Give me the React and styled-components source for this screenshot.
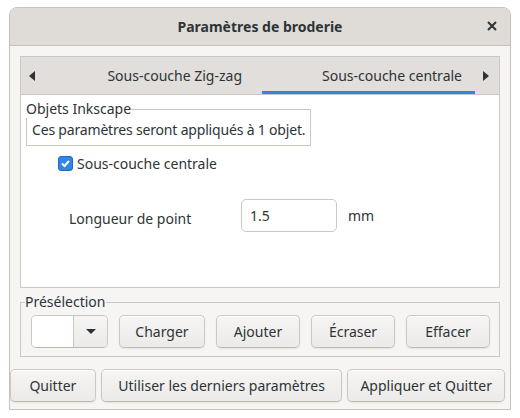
import React from 'react'
import styled, { createGlobalStyle } from 'styled-components'

const GlobalStyle = createGlobalStyle`
  html, body {
    margin: 0;
    padding: 0;
    background: #ffffff;
  }
  body {
    font-family: "Noto Sans", "DejaVu Sans", sans-serif;
    font-size: 14px;
    color: #2e3436;
  }
`

const Page = styled.div`
  width: 520px;
  height: 418px;
  padding: 7px 9px 8px 9px;
  box-sizing: border-box;
`

const Window = styled.div`
  height: 403px;
  border: 1px solid #c6c1bc;
  border-radius: 8px 8px 0 0;
  background: #f6f5f4;
  display: flex;
  flex-direction: column;
  overflow: hidden;
  box-sizing: border-box;
`

const TitleBar = styled.div`
  height: 37px;
  flex: none;
  background: #dfdcd8;
  border-bottom: 1px solid #c6c1bc;
  display: flex;
  align-items: center;
  justify-content: center;
  position: relative;
  font-weight: bold;
  font-size: 14px;
  color: #2e3436;
`

const CloseButton = styled.div`
  position: absolute;
  right: 12px;
  top: 12px;
  width: 12px;
  height: 12px;
  display: flex;
  align-items: center;
  justify-content: center;
`

const Body = styled.div`
  flex: 1;
  display: flex;
  flex-direction: column;
  padding: 10px 10px 0 10px;
`

const Notebook = styled.div`
  height: 232px;
  border: 1px solid #cdc7c2;
  display: flex;
  flex-direction: column;
  box-sizing: border-box;
`

const TabBar = styled.div`
  height: 37px;
  flex: none;
  background: #e1dedb;
  border-bottom: 1px solid #cdc7c2;
  display: flex;
  align-items: stretch;
`

const Arrow = styled.div`
  width: 22px;
  flex: none;
  display: flex;
  align-items: center;
  justify-content: center;
`

const Tab = styled.div`
  width: ${p => p.$w}px;
  display: flex;
  align-items: center;
  justify-content: flex-end;
  padding-right: ${p => p.$pr}px;
  box-sizing: border-box;
  color: #2e3436;
  border-bottom: 3px solid ${p => (p.$active ? '#3584e4' : 'transparent')};
  padding-top: 3px;
  white-space: nowrap;
`

const Page1 = styled.div`
  flex: 1;
  background: #ffffff;
  padding: 5px 5px 0 5px;
  display: flex;
  flex-direction: column;
  align-items: flex-start;
`

const Frame = styled.fieldset`
  margin: 0;
  padding: 0 5px 5px 5px;
  border: 1px solid #cdc7c2;
  box-sizing: border-box;
  min-width: 0;
`

const Legend = styled.legend`
  padding: 0;
  margin-left: -6px;
  font-size: 14px;
  line-height: 18px;
  color: #2e3436;
`

const InfoText = styled.div`
  line-height: 20px;
  padding-top: 2px;
  white-space: nowrap;
  letter-spacing: -0.18px;
`

const CheckRow = styled.label`
  display: flex;
  align-items: center;
  gap: 4px;
  margin: 8px 0 0 32px;
`

const CheckBox = styled.span`
  width: 15px;
  height: 15px;
  border-radius: 3px;
  background: #3584e4;
  border: 1px solid #1b6acb;
  box-sizing: border-box;
  display: flex;
  align-items: center;
  justify-content: center;
`

const FieldRow = styled.div`
  display: flex;
  align-items: center;
  margin: 27px 0 0 43px;
`

const FieldLabel = styled.div`
  width: 172px;
  padding-top: 4px;
`

const Entry = styled.div`
  width: 96px;
  height: 33px;
  box-sizing: border-box;
  border: 1px solid #cdc7c2;
  border-radius: 5px;
  background: #ffffff;
  padding: 0 8px;
  display: flex;
  align-items: center;
  margin-top: -1px;
  margin-right: 11px;
  color: #2e3436;
`

const Unit = styled.div`
  margin-top: -1px;
`

const PresetFrame = styled(Frame)`
  margin-top: 5px;
  padding: 4px 10px 8px 10px;
  display: flex;
`

const PresetRow = styled.div`
  display: flex;
  gap: 11px;
  align-items: center;
`

const Combo = styled.div`
  width: 77px;
  height: 33px;
  box-sizing: border-box;
  border: 1px solid #cdc7c2;
  border-bottom-color: #bfb8b1;
  border-radius: 5px;
  display: flex;
  overflow: hidden;
`

const ComboField = styled.div`
  width: 41px;
  background: #ffffff;
  border-right: 1px solid #cdc7c2;
`

const ComboArrow = styled.div`
  flex: 1;
  background: linear-gradient(to top, #edebe9 2px, #f6f5f4);
  display: flex;
  align-items: center;
  justify-content: center;
`

const Button = styled.div`
  width: ${p => p.$w}px;
  height: 33px;
  box-sizing: border-box;
  border: 1px solid #cdc7c2;
  border-bottom-color: #bfb8b1;
  border-radius: 5px;
  background: linear-gradient(to top, #edebe9 2px, #f6f5f4);
  box-shadow: inset 0 1px #ffffff, 0 1px 2px rgba(0, 0, 0, 0.07);
  display: flex;
  align-items: center;
  justify-content: center;
  color: #2e3436;
  white-space: nowrap;
`

const ActionRow = styled.div`
  display: flex;
  gap: 5px;
  margin: 12px -10px 0 -10px;
  padding: 0 5px 0 0;
`

const App = () => {
  return (
    <>
      <GlobalStyle />
      <Page>
        <Window>
          <TitleBar>
            Paramètres de broderie
            <CloseButton>
              <svg width="10" height="10" viewBox="0 0 10 10">
                <path d="M1 1L9 9M9 1L1 9" stroke="#2e3436" strokeWidth="2" />
              </svg>
            </CloseButton>
          </TitleBar>
          <Body>
            <Notebook>
              <TabBar>
                <Arrow>
                  <svg width="6" height="10" viewBox="0 0 6 10">
                    <path d="M6 0L0 5L6 10Z" fill="#2e3436" />
                  </svg>
                </Arrow>
                <Tab $w={219} $pr={20}>Sous-couche Zig-zag</Tab>
                <Tab $w={213} $pr={13} $active>Sous-couche centrale</Tab>
                <Arrow>
                  <svg width="6" height="10" viewBox="0 0 6 10">
                    <path d="M0 0L6 5L0 10Z" fill="#2e3436" />
                  </svg>
                </Arrow>
              </TabBar>
              <Page1>
                <Frame>
                  <Legend>Objets Inkscape</Legend>
                  <InfoText>Ces paramètres seront appliqués à 1 objet.</InfoText>
                </Frame>
                <CheckRow>
                  <CheckBox>
                    <svg width="11" height="11" viewBox="0 0 11 11">
                      <path d="M2 5.5L4.5 8L9 3" stroke="#ffffff" strokeWidth="2" fill="none" />
                    </svg>
                  </CheckBox>
                  Sous-couche centrale
                </CheckRow>
                <FieldRow>
                  <FieldLabel>Longueur de point</FieldLabel>
                  <Entry>1.5</Entry>
                  <Unit>mm</Unit>
                </FieldRow>
              </Page1>
            </Notebook>
            <PresetFrame>
              <Legend>Présélection</Legend>
              <PresetRow>
                <Combo>
                  <ComboField />
                  <ComboArrow>
                    <svg width="10" height="6" viewBox="0 0 10 6">
                      <path d="M0 0L10 0L5 5Z" fill="#2e3436" />
                    </svg>
                  </ComboArrow>
                </Combo>
                <Button $w={86}>Charger</Button>
                <Button $w={84}>Ajouter</Button>
                <Button $w={84}>Écraser</Button>
                <Button $w={84}>Effacer</Button>
              </PresetRow>
            </PresetFrame>
            <ActionRow>
              <Button $w={86}>Quitter</Button>
              <Button $w={242}>Utiliser les derniers paramètres</Button>
              <Button $w={158}>Appliquer et Quitter</Button>
            </ActionRow>
          </Body>
        </Window>
      </Page>
    </>
  )
}

export default App
